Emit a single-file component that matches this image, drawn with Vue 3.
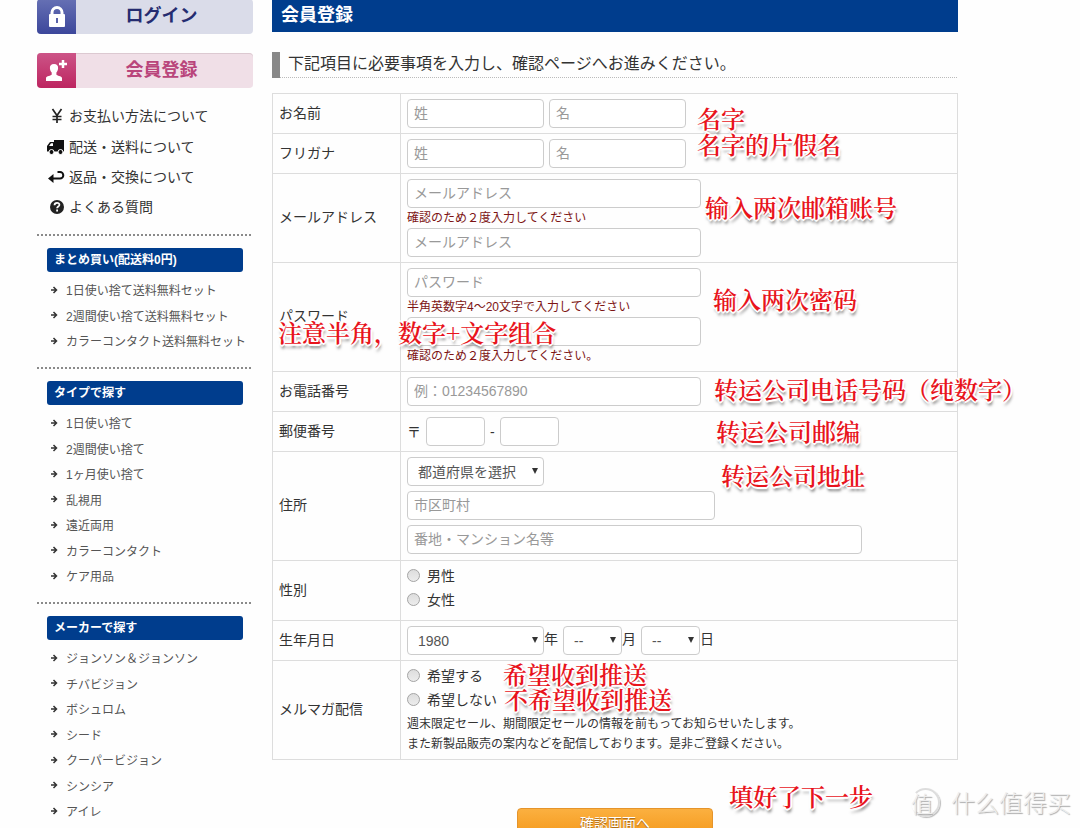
<script setup>
const shopSections = [
  { title: 'まとめ買い(配送料0円)', items: ['1日使い捨て送料無料セット', '2週間使い捨て送料無料セット', 'カラーコンタクト送料無料セット'] },
  { title: 'タイプで探す', items: ['1日使い捨て', '2週間使い捨て', '1ヶ月使い捨て', '乱視用', '遠近両用', 'カラーコンタクト', 'ケア用品'] },
  { title: 'メーカーで探す', items: ['ジョンソン＆ジョンソン', 'チバビジョン', 'ボシュロム', 'シード', 'クーパービジョン', 'シンシア', 'アイレ'] },
]

const notes = [
  { id: 'name', text: '名字' },
  { id: 'kana', text: '名字的片假名' },
  { id: 'mail', text: '输入两次邮箱账号' },
  { id: 'pass', text: '输入两次密码' },
  { id: 'rule', text: '注意半角，数字+文字组合' },
  { id: 'tel', text: '转运公司电话号码（纯数字）' },
  { id: 'postcode', text: '转运公司邮编' },
  { id: 'addr', text: '转运公司地址' },
  { id: 'yes', text: '希望收到推送' },
  { id: 'no', text: '不希望收到推送' },
  { id: 'next', text: '填好了下一步' },
]
</script>

<template>
  <div class="page">
    <aside class="side">
      <a href="#login" class="banner login">
        <span class="banner-icon">
          <svg width="16" height="22" viewBox="0 0 16 22">
            <path d="M3 10V6.500a5 5 0 0 1 10 0V10" fill="none" stroke="#fff" stroke-width="3" />
            <rect x="0" y="8" width="16" height="13" rx="1" fill="#fff" />
            <path d="M7 12h2v5H7z" fill="#5962aa" />
          </svg>
        </span>
        <span class="banner-text">ログイン</span>
      </a>
      <a href="#register" class="banner register">
        <span class="banner-icon">
          <svg width="22" height="22" viewBox="0 0 22 22">
            <path d="M8 4c2.900 0 4.300 1.700 4.100 4.300-.1 2-.9 3.300-1.700 4.200v2c.3 1.200 5.300 1.600 5.600 3.500V21H0v-3c.2-1.900 5.300-2.300 5.700-3.500v-2C4.800 11.600 4 10.300 3.900 8.300 3.700 5.700 5.100 4 8 4z" fill="#fff" />
            <path d="M17 0v8M13 4h8" stroke="#fff" stroke-width="2.500" />
          </svg>
        </span>
        <span class="banner-text">会員登録</span>
      </a>

      <ul class="guide">
        <li>
          <svg width="18" height="16" viewBox="0 0 18 16"><path d="M5.500 1 10 7.500 14.500 1M10 7v8M5.500 8.500h9M5.500 11.500h9" fill="none" stroke="#222" stroke-width="1.700" /></svg>
          <a href="#pay">お支払い方法について</a>
        </li>
        <li>
          <svg width="18" height="16" viewBox="0 0 18 16"><path d="M7 1h10v11.500H0V7l3-4h4z" fill="#111" /><path d="M2 7l2-2.800h2V7z" fill="#fff" /><circle cx="4.500" cy="13" r="2.500" fill="#111" stroke="#fff" /><circle cx="13.500" cy="13" r="2.500" fill="#111" stroke="#fff" /></svg>
          <a href="#ship">配送・送料について</a>
        </li>
        <li>
          <svg width="18" height="16" viewBox="0 0 18 16"><path d="M10.500 3H13a3.300 3.300 0 0 1 0 6.600H5" fill="none" stroke="#111" stroke-width="2" /><path d="M1 9.600 6.500 5v9z" fill="#111" /></svg>
          <a href="#return">返品・交換について</a>
        </li>
        <li>
          <svg width="18" height="16" viewBox="0 0 18 16"><circle cx="10" cy="8" r="7" fill="#222" /><path d="M7.500 6.300C7.600 3 12.600 3.200 12.400 6c-.1 1.500-2.300 1.700-2.300 3.300M10.100 10.500v2" fill="none" stroke="#fff" stroke-width="1.800" /></svg>
          <a href="#faq">よくある質問</a>
        </li>
      </ul>

      <section v-for="s in shopSections" :key="s.title" class="group">
        <h2>{{ s.title }}</h2>
        <ul>
          <li v-for="item in s.items" :key="item">
            <svg width="7" height="8" viewBox="0 0 7 8"><path d="M0 4h5M2.500 1 5.500 4l-3 3" fill="none" stroke="#333" stroke-width="1.500" /></svg>
            <a href="#list">{{ item }}</a>
          </li>
        </ul>
      </section>
    </aside>

    <main class="main">
      <h1>会員登録</h1>
      <p class="lead">下記項目に必要事項を入力し、確認ページへお進みください。</p>
      <form @submit.prevent>
        <table>
          <tbody>
            <tr>
              <th scope="row">お名前</th>
              <td><div class="line"><input class="mid" type="text" placeholder="姓" aria-label="お名前 姓"><input class="mid" type="text" placeholder="名" aria-label="お名前 名"></div></td>
            </tr>
            <tr>
              <th scope="row">フリガナ</th>
              <td><div class="line"><input class="mid" type="text" placeholder="姓" aria-label="フリガナ 姓"><input class="mid" type="text" placeholder="名" aria-label="フリガナ 名"></div></td>
            </tr>
            <tr>
              <th scope="row"><label for="mail">メールアドレス</label></th>
              <td>
                <input id="mail" class="wide" type="email" placeholder="メールアドレス">
                <p class="hint">確認のため２度入力してください</p>
                <input class="wide" type="email" placeholder="メールアドレス" aria-label="メールアドレス 確認">
              </td>
            </tr>
            <tr>
              <th scope="row"><label for="pass">パスワード</label></th>
              <td>
                <input id="pass" class="wide" type="password" placeholder="パスワード">
                <p class="hint">半角英数字4～20文字で入力してください</p>
                <input class="wide" type="password" aria-label="パスワード 確認">
                <p class="hint">確認のため２度入力してください。</p>
              </td>
            </tr>
            <tr>
              <th scope="row"><label for="tel">お電話番号</label></th>
              <td><input id="tel" class="wide" type="tel" placeholder="例：01234567890"></td>
            </tr>
            <tr>
              <th scope="row"><label for="zip">郵便番号</label></th>
              <td><div class="line zip"><span>〒</span><input id="zip" class="small" type="text"><span>-</span><input class="small" type="text" aria-label="郵便番号 下4桁"></div></td>
            </tr>
            <tr class="address">
              <th scope="row"><label for="pref">住所</label></th>
              <td>
                <div class="stack">
                  <span class="select mid"><select id="pref"><option>都道府県を選択</option></select></span>
                  <input class="city" type="text" placeholder="市区町村" aria-label="市区町村">
                  <input class="street" type="text" placeholder="番地・マンション名等" aria-label="番地・マンション名等">
                </div>
              </td>
            </tr>
            <tr class="gender">
              <th scope="row">性別</th>
              <td class="choices">
                <label><input type="radio" name="gender">男性</label>
                <label><input type="radio" name="gender">女性</label>
              </td>
            </tr>
            <tr>
              <th scope="row"><label for="year">生年月日</label></th>
              <td>
                <div class="line birth">
                  <span class="select mid"><select id="year"><option>1980</option></select></span><span class="unit">年</span>
                  <span class="select small"><select aria-label="月"><option>--</option></select></span><span class="unit">月</span>
                  <span class="select small"><select aria-label="日"><option>--</option></select></span><span class="unit">日</span>
                </div>
              </td>
            </tr>
            <tr class="magazine">
              <th scope="row">メルマガ配信</th>
              <td class="choices">
                <label><input type="radio" name="magazine">希望する</label>
                <label><input type="radio" name="magazine">希望しない</label>
                <p class="about">週末限定セール、期間限定セールの情報を前もってお知らせいたします。<br>また新製品販売の案内などを配信しております。是非ご登録ください。</p>
              </td>
            </tr>
          </tbody>
        </table>
        <button class="confirm" type="submit">確認画面へ</button>
      </form>
    </main>

    <p v-for="n in notes" :key="n.id" class="note" :class="n.id">{{ n.text }}</p>
    <div class="mark">
      <span class="seal">值</span>
      <span>什么值得买</span>
    </div>
  </div>
</template>

<style>
body {
  margin: 0;
  background: #fff;
}
</style>

<style scoped>
* {
  box-sizing: border-box;
}
.page {
  position: relative;
  display: grid;
  grid-template-columns: 216px 1fr;
  column-gap: 19px;
  height: 100vh;
  padding: 0 122px 0 37px;
  overflow: hidden;
  background: #fefefe;
  color: #333;
  font-family: "Liberation Sans", "Noto Sans CJK JP", sans-serif;
  font-size: 14px;
}
h1, h2, p, ul {
  margin: 0;
  padding: 0;
}
ul {
  list-style: none;
}
a {
  color: inherit;
  text-decoration: none;
}
svg {
  flex: none;
}

.banner {
  display: flex;
  height: 35px;
  border-radius: 4px;
  overflow: hidden;
  font-size: 18px;
  font-weight: bold;
}
.banner-icon {
  display: flex;
  align-items: center;
  justify-content: center;
  width: 39px;
}
.banner-text {
  flex: 1;
  padding-right: 6px;
  line-height: 34px;
  text-align: center;
}
.login {
  margin-top: -1px;
  background: #dadce9;
  color: #252c70;
}
.login .banner-icon {
  background: linear-gradient(#6670b4, #3c479b);
}
.register {
  margin-top: 19px;
  background: #f0dfe7;
  color: #b9457b;
  box-shadow: inset 0 1px #dcc9d1;
}
.register .banner-icon {
  background: linear-gradient(#cc5487, #bd2560);
}

.guide {
  padding: 13px 0 12px 10px;
}
.guide li {
  display: flex;
  align-items: center;
  gap: 4px;
  height: 30px;
}
.guide li:nth-child(2) {
  height: 31px;
}
.guide a {
  line-height: 20px;
}

.group {
  padding: 14px 10px;
  background: repeating-linear-gradient(90deg, #8a8a8a 0 2px, transparent 2px 4px) top / 100% 2px no-repeat;
}
.group h2 {
  height: 24px;
  padding-left: 7px;
  border-radius: 3px;
  background: #003d8d;
  color: #fff;
  font-size: 12px;
  line-height: 24px;
}
.group ul {
  padding-top: 5px;
}
.group li {
  display: flex;
  align-items: center;
  gap: 8px;
  height: 25px;
  padding-left: 4px;
  color: #555;
  font-size: 12px;
  white-space: nowrap;
}
.group li:nth-child(even) {
  height: 26px;
}

h1 {
  height: 32px;
  padding-left: 9px;
  background: #003d8d;
  color: #fff;
  font-size: 18px;
  line-height: 30px;
}
.lead {
  height: 26px;
  margin: 20px 0 15px;
  padding-left: 8px;
  border-left: 8px solid #888;
  background: repeating-linear-gradient(90deg, #bbb 0 1px, transparent 1px 2px) bottom / 100% 1px no-repeat;
  font-size: 16px;
  line-height: 24px;
}

table {
  width: 100%;
  border-collapse: collapse;
  table-layout: fixed;
}
th, td {
  height: 40px;
  border: 1px solid #ddd;
}
th {
  width: 128px;
  padding: 0 6px 4px;
  font-weight: normal;
  text-align: left;
}
td {
  padding: 5px 6px;
  vertical-align: top;
}
input, select {
  font: inherit;
  color: #555;
  border: 1px solid #ccc;
  border-radius: 4px;
  background: #fff;
}
input {
  display: block;
  height: 29px;
  margin: 0;
  padding: 0 6px 2px;
}
input::placeholder {
  color: #999;
  opacity: 1;
}
.mid { width: 137px; }
.wide { width: 294px; }
.small { width: 59px; }
.city { width: 308px; }
.street { width: 455px; }
.line {
  display: flex;
  align-items: center;
  gap: 5px;
}
.line span {
  line-height: 20px;
}
.stack {
  display: grid;
  gap: 5px;
}
.select {
  position: relative;
  display: block;
}
.select::after {
  position: absolute;
  top: 11px;
  right: 6px;
  border: 3px solid transparent;
  border-top: 6px solid #333;
  border-bottom: 0;
  content: "";
}
select {
  display: block;
  width: 100%;
  height: 29px;
  padding: 0 10px;
  appearance: none;
}
.birth {
  gap: 0;
}
.unit {
  width: 19px;
  padding-bottom: 3px;
}
.hint {
  color: #7d1414;
  font-size: 12px;
  line-height: 20px;
}
.address td {
  height: 109px;
}
.gender td {
  height: 60px;
}
.magazine td {
  height: 99px;
}
td.choices {
  padding: 2px 6px 0;
}
.choices label {
  display: flex;
  align-items: center;
  gap: 7px;
  height: 24px;
}
.choices input {
  width: 13px;
  height: 13px;
  padding: 0;
  border: 1px solid #a5a5a5;
  border-radius: 50%;
  background: linear-gradient(#ddd, #ececec);
  appearance: none;
}
.about {
  padding-top: 3px;
  font-size: 12px;
  line-height: 20px;
}
.confirm {
  display: block;
  width: 196px;
  height: 36px;
  margin: 48px auto 0;
  padding: 0 0 8px;
  border: 1px solid #e5942b;
  border-radius: 4px;
  background: linear-gradient(#fbb040, #f39312);
  color: #fff;
  font: inherit;
  text-shadow: 0 1px 1px #9b6118;
}

.note {
  position: absolute;
  color: #e8141c;
  font-family: "Noto Serif CJK SC", "Liberation Serif", "Noto Sans CJK SC", serif;
  font-size: 24px;
  font-weight: 600;
  line-height: 30px;
  white-space: nowrap;
  text-shadow: 2px 0 #fff, -2px 0 #fff, 0 2px #fff, 0 -2px #fff, 1px 1px #fff, -1px 1px #fff, 1px -1px #fff, -1px -1px #fff, 1px 4px 3px #777;
}
.name { left: 697px; top: 103px; }
.kana { left: 697px; top: 129px; }
.mail { left: 705px; top: 192px; }
.pass { left: 713px; top: 284px; }
.rule { left: 278px; top: 317px; }
.tel { left: 714px; top: 374px; }
.postcode { left: 716px; top: 416px; }
.addr { left: 721px; top: 460px; }
.yes { left: 503px; top: 659px; }
.no { left: 504px; top: 684px; }
.next { left: 729px; top: 781px; }

.mark {
  position: absolute;
  right: 9px;
  bottom: 8px;
  display: flex;
  align-items: center;
  gap: 11px;
  color: #eee;
  font-family: "Noto Sans CJK SC", sans-serif;
  font-size: 24px;
  font-weight: 300;
  line-height: 36px;
  text-shadow: 1px 1px 1px #aaa;
}
.seal {
  width: 29px;
  height: 29px;
  border: 2px solid #ddd;
  border-left-color: transparent;
  border-radius: 50%;
  box-shadow: 1px 1px 1px #bbb;
  font-size: 22px;
  line-height: 25px;
  text-indent: -2px;
}
</style>
